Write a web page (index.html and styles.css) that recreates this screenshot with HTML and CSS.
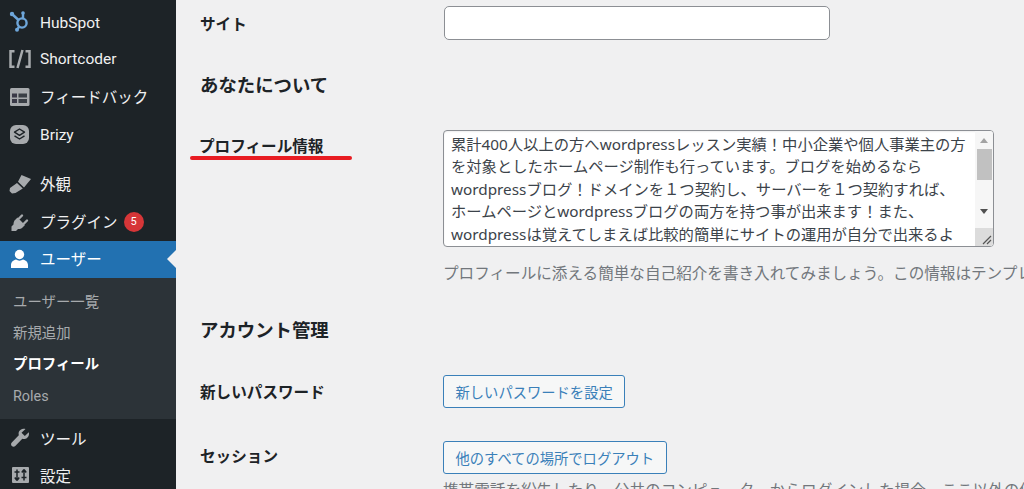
FILE: index.html
```html
<!DOCTYPE html>
<html lang="ja">
<head>
<meta charset="utf-8">
<title>プロフィール</title>
<link rel="stylesheet" href="styles.css">
</head>
<body>
<div class="page">
  <nav class="side">
    <a class="item lat"><svg class="ic" viewBox="0 0 22 22"><g fill="none" stroke="#6ea6da" stroke-width="2.400" stroke-linecap="round"><circle cx="13" cy="12" r="4.600"/><path d="M3 3 9.500 9M14 7V2M10 16l-2 2.500"/></g><circle cx="3" cy="3" r="2.200" fill="#6ea6da"/><circle cx="14" cy="2" r="1.800" fill="#6ea6da"/><circle cx="8" cy="18.800" r="2" fill="#6ea6da"/></svg><span>HubSpot</span></a>
    <a class="item"><svg class="ic" viewBox="0 0 22 22"><g fill="none" stroke="#a7aaad" stroke-width="2.500"><path d="M5.500 3.200H1.500v15.600h4M16.500 3.200h4v15.600h-4M13.500 2 8.500 20"/></g></svg><span>Shortcoder</span></a>
    <a class="item jp"><svg class="ic" viewBox="0 0 22 22"><rect x="1" y="2" width="19.500" height="18" rx="1.500" fill="#a7aaad"/><rect x="3" y="7.500" width="5" height="4" fill="#3a3a48"/><rect x="3" y="13" width="5" height="4" fill="#3a3a48"/><rect x="9.500" y="7.500" width="8.500" height="4" fill="#3a3f46"/><rect x="9.500" y="13" width="8.500" height="4" fill="#3a3f46"/></svg><span>フィードバック</span></a>
    <a class="item lat"><svg class="ic" viewBox="0 0 22 22"><rect x="1" y="2" width="19" height="19" rx="6" fill="#a7aaad"/><path d="M10.500 6 15.500 9.200 10.500 12.400 5.500 9.200ZM5.500 12.800 10.500 16 15.500 12.800" fill="none" stroke="#1d2327" stroke-width="1.400" stroke-linejoin="round"/></svg><span>Brizy</span></a>
    <div class="sep"></div>
    <a class="item jp"><svg class="ic" viewBox="0 0 22 22"><path d="M12.500 2 22 6 15 14.500 9 8.800Z M8 10 13.800 15.500 6.500 20 3 20.500 .500 18 1 15Z" fill="#a7aaad"/></svg><span>外観</span></a>
    <a class="item jp"><svg class="ic" viewBox="0 0 22 22"><path d="M2.500 20V15.500L4.500 13.500C4.500 11.500 5 10 6 9L8.500 6.500 16 14 13.500 16.500C12.500 17.500 11 18 9 18L7 20Z" fill="#a7aaad"/><path d="M10 7.500 13 4.500M15 12.500 18 9.500" stroke="#a7aaad" stroke-width="2.400" stroke-linecap="round"/></svg><span>プラグイン</span><b class="badge">5</b></a>
    <a class="item jp current"><svg class="ic" viewBox="0 0 22 22"><circle cx="10.500" cy="6.500" r="4.700" fill="#fff"/><path d="M2 20v-3c0-3 2.500-5 5-5.500 2 1.500 5 1.500 7 0 2.500.5 5 2.500 5 5.500v3Z" fill="#fff"/></svg><span>ユーザー</span></a>
    <div class="sub">
      <a class="subitem">ユーザー一覧</a>
      <a class="subitem">新規追加</a>
      <a class="subitem on">プロフィール</a>
      <a class="subitem roles">Roles</a>
    </div>
    <a class="item"><svg class="ic" viewBox="0 0 22 22"><path d="M19.800 5.200 15.800 9 12.500 5.800 16.500 2C13.800 1 10.800 2.300 9.800 5 9.500 6 9.500 7.200 9.800 8.200L2.800 15.500C1.800 16.500 1.800 18 2.800 19 3.800 20 5.300 20 6.300 19L13.300 11.800C14.300 12.200 15.400 12.200 16.500 11.800 19.200 10.900 20.600 7.800 19.800 5.200Z" fill="#a7aaad"/></svg><span>ツール</span></a>
    <a class="item"><svg class="ic" viewBox="0 0 22 22"><rect x="3" y="3" width="17" height="16" rx="1" fill="#a7aaad"/><path d="M8 5.500v11M8 16.500l-2.200-3M8 16.500l2.200-3M15 16.500v-11M15 5.500l-2.200 3M15 5.500l2.200 3M5.500 8h5M12.500 13.500h5" fill="none" stroke="#1d2327" stroke-width="1.500"/></svg><span>設定</span></a>
  </nav>
  <main class="main">
    <div class="row row-site">
      <div class="label">サイト</div>
      <input class="input" type="text" aria-label="サイト">
    </div>
    <h2 class="heading h-about">あなたについて</h2>
    <div class="row row-bio">
      <div class="label bio-label">プロフィール情報<i class="redline"></i></div>
      <div>
        <div class="textarea">
          <div class="ta-text">累計400人以上の方へwordpressレッスン実績！中小企業や個人事業主の方<br>を対象としたホームページ制作も行っています。ブログを始めるなら<br>wordpressブログ！ドメインを１つ契約し、サーバーを１つ契約すれば、<br>ホームページとwordpressブログの両方を持つ事が出来ます！また、<br>wordpressは覚えてしまえば比較的簡単にサイトの運用が自分で出来るよ</div>
          <div class="scroll">
            <div class="arrow up"></div>
            <div class="thumb"></div>
            <div class="arrow down"></div>
          </div>
          <div class="corner"><svg viewBox="0 0 10 10" width="10" height="10"><path d="M1 9 9 1M5 9 9 5" stroke="#555" stroke-width="1.200"/></svg></div>
        </div>
        <p class="desc bio-desc">プロフィールに添える簡単な自己紹介を書き入れてみましょう。この情報はテンプレートで公開される可能性があります。</p>
      </div>
    </div>
    <h2 class="heading h-account">アカウント管理</h2>
    <div class="row row-pass">
      <div class="label">新しいパスワード</div>
      <div><button class="btn">新しいパスワードを設定</button></div>
    </div>
    <div class="row row-session">
      <div class="label">セッション</div>
      <div>
        <button class="btn">他のすべての場所でログアウト</button>
        <p class="desc sess-desc">携帯電話を紛失したり、公共のコンピューターからログインした場合、ここ以外の他の場所からログアウトできます。</p>
      </div>
    </div>
  </main>
</div>
</body>
</html>
```
FILE: styles.css
```css
* { box-sizing: border-box; }
html, body { margin: 0; height: 489px; overflow: hidden; }
body { background: #f0f0f1; color: #1d2327; font-family: "Noto Sans", "Noto Sans CJK JP", sans-serif; }
.page { display: flex; height: 489px; width: 1024px; overflow: hidden; }

.side { width: 176px; flex: none; background: #1d2327; padding-top: 3px; height: 489px; overflow: hidden; font-family: Roboto, "Noto Sans CJK JP", sans-serif; }
.item { display: flex; align-items: center; height: 37.500px; padding-left: 9px; color: #f0f0f1; font-size: 15.500px; position: relative; white-space: nowrap; }
.jp span { margin-top: -2px; }
.lat span { margin-top: 2px; }
.ic { width: 22px; height: 22px; flex: none; margin-right: 9px; }
.sep { height: 12.500px; }
.badge { display: inline-flex; align-items: center; justify-content: center; width: 20px; height: 20px; margin-left: 6px; border-radius: 50%; background: #d63638; color: #fff; font-size: 11px; font-weight: 400; }
.current { background: #2271b1; color: #fff; }
.current::after { content: ""; position: absolute; right: 0; top: 50%; margin-top: -9px; border: 9px solid transparent; border-right-color: #f0f0f1; border-left: 0; }
.sub { background: #2c3338; padding: 9px 0 8px; height: 141px; }
.subitem { display: block; height: 31px; line-height: 31px; padding-left: 13px; font-size: 14.400px; color: #a7aaad; white-space: nowrap; }
.subitem.roles { margin-top: 1px; }
.subitem.on { color: #fff; font-weight: 700; }

.main { flex: 1; min-width: 0; padding: 6px 0 0 24px; }
.row { display: grid; grid-template-columns: 243px 1fr; }
.label { font-size: 15.600px; font-weight: 700; color: #1d2327; white-space: nowrap; position: relative; }
.heading { margin: 0; font-size: 18.400px; font-weight: 700; line-height: 26px; color: #1d2327; }

.input { width: 386px; height: 34px; margin-left: 1px; background: #fff; border: 1px solid #8c8f94; border-radius: 5px; display: block; }
.row-site .label { padding-top: 6px; }
.h-about { margin-top: 32px; }
.row-bio { margin-top: 32px; }
.bio-label { padding-top: 4px; margin-left: -1px; }
.redline { position: absolute; left: -9px; top: 26px; width: 162px; height: 4px; border-radius: 2px; background: #e81c22; }

.textarea { position: relative; width: 551px; height: 117px; background: #fff; border: 1px solid #8c8f94; border-radius: 4px; overflow: hidden; box-shadow: inset 0 1px 2px rgba(0, 0, 0, .07); }
.ta-text { padding: 2px 0 0 7px; font-size: 15.300px; line-height: 22.400px; color: #3c434a; white-space: nowrap; }
.scroll { position: absolute; right: 0; top: 0; width: 18px; height: 100%; background: #f6f6f6; display: flex; flex-direction: column; align-items: center; }
.thumb { width: 15px; height: 31px; margin-top: 6px; background: #c1c1c1; }
.arrow { width: 0; height: 0; border-left: 4px solid transparent; border-right: 4px solid transparent; }
.arrow.up { margin-top: 7px; border-bottom: 5px solid #a3a3a3; }
.arrow.down { margin-top: 29px; border-top: 5px solid #505050; }
.corner { position: absolute; right: 0; bottom: 0; width: 18px; height: 18px; background: #dcdcdc; display: flex; align-items: flex-end; justify-content: flex-end; padding: 0 1px 1px 0; }

.desc { margin: 0; font-size: 15.600px; color: #72777c; white-space: nowrap; }
.bio-desc { margin-top: 14px; }
.h-account { margin-top: 33px; }
.row-pass { margin-top: 32px; }
.row-pass .label { padding-top: 5px; }
.row-session { margin-top: 33px; }
.row-session .label { padding-top: 3px; }
.btn { display: block; height: 33px; padding: 0 11.500px; font-family: inherit; font-size: 14.300px; color: #3a80b9; background: #f6f7f7; border: 1px solid #3a80b9; border-radius: 3px; white-space: nowrap; }
.sess-desc { margin-top: 4px; }
```
